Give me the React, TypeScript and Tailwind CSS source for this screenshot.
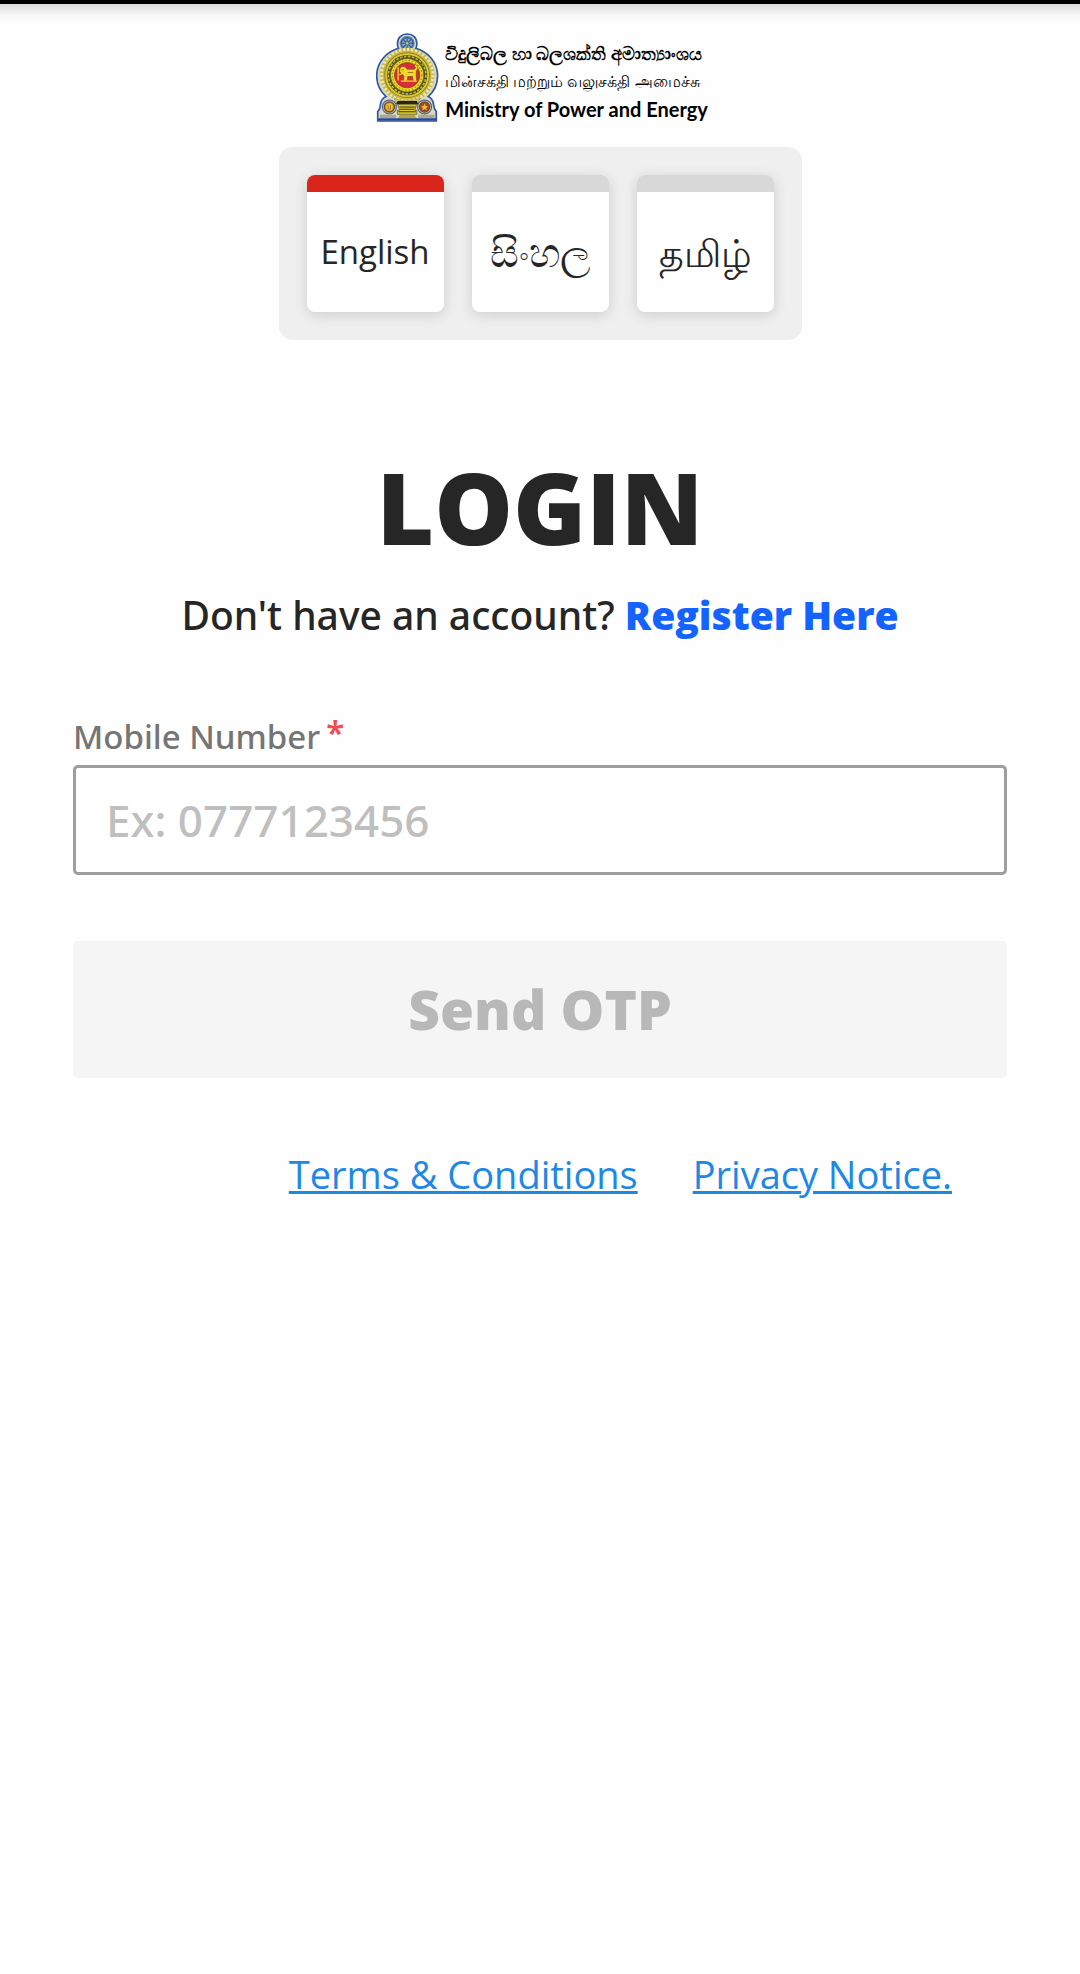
import { useState } from "react";

const languages = [
  { code: "en", label: "English", size: "text-[33px]" },
  { code: "si", label: "සිංහල", size: "text-[40px]" },
  { code: "ta", label: "தமிழ்", size: "text-[38px]" },
];

function Emblem() {
  return (
    <svg viewBox="48 36 188 266" className="h-[89px] w-[63px] shrink-0" role="img" aria-label="National emblem">
      <path
        d="M141 39c17 0 29 11 29 29 0 6-1 10-3 14 36 10 65 41 65 82 0 26-11 47-28 62 9 4 15 13 16 25 1 10 2 14 8 20v28H53v-28c6-6 8-10 8-20 1-12 7-21 17-25-17-15-28-36-28-62 0-41 29-72 65-82-2-4-3-8-3-14 0-18 12-29 29-29Z"
        fill="#d9d9c4"
        stroke="#2f56a5"
        strokeWidth="5"
      />
      <circle cx="141" cy="67" r="23" fill="#8fa6b8" />
      <circle cx="141" cy="67" r="18" fill="#8fa6b8" stroke="#3b68a8" strokeWidth="5" />
      <g stroke="#26568f" strokeWidth="3">
        <path d="M141 49v36M123 67h36M128 54l26 26M154 54l-26 26" />
      </g>
      <circle cx="141" cy="67" r="4" fill="#c5c27d" />
      <circle cx="141" cy="162" r="82" fill="#c9b845" />
      <circle cx="141" cy="162" r="77" fill="none" stroke="#e9e4bb" strokeWidth="9" strokeDasharray="7 5" />
      <circle cx="141" cy="162" r="67" fill="#d9c92f" stroke="#8f8327" strokeWidth="3" />
      <circle cx="141" cy="162" r="60" fill="#4b4720" />
      <circle cx="141" cy="162" r="56" fill="none" stroke="#c6b72b" strokeWidth="5" strokeDasharray="8 4" />
      <circle cx="141" cy="162" r="50" fill="#eedb25" stroke="#6e6725" strokeWidth="3" />
      <circle cx="141" cy="162" r="44" fill="none" stroke="#a79b27" strokeWidth="4" strokeDasharray="5 5" />
      <circle cx="141" cy="162" r="38" fill="#d92b3a" stroke="#7c4b22" strokeWidth="2" />
      <path
        d="M118 150c-1-9 5-15 12-14 6 1 8 5 11 8h20c6 0 6-7 1-9l3-5c9 3 10 12 4 18l-1 13 2 19h-11l-2-14h-14l-2 14h-11l1-15-4-5-8 4-4-4 7-4z"
        fill="#f1d924"
        stroke="#78451f"
        strokeWidth="2"
      />
      <path d="M114 138v40M122 180h48" stroke="#f1d924" strokeWidth="4" />
      <path d="M123 146h8M143 154h16" stroke="#78451f" strokeWidth="2" />
      <path d="M102 231c12 5 24 8 39 8s27-3 39-8l-10 20h-58z" fill="#d8ca72" stroke="#94903f" strokeWidth="2" />
      <path d="M112 239h58l4 9h-66z" fill="#26251d" />
      <path d="M113 249h56l-5 18h6v12h-58v-12h6z" fill="#dfcb28" stroke="#45401d" strokeWidth="2" />
      <path d="M118 257h46M120 264h42M115 271h52" stroke="#38351b" strokeWidth="3" />
      <path d="M119 280h44l6 12h-56z" fill="#b7a630" />
      <path d="M59 285h49M174 285h49" stroke="#aaa98e" strokeWidth="10" />
      <path d="M54 294h174" stroke="#28489b" strokeWidth="7" />
      <circle cx="88" cy="257" r="21" fill="#c9bd86" stroke="#425e93" strokeWidth="3" />
      <circle cx="88" cy="257" r="15" fill="#c79930" stroke="#7b4a31" strokeWidth="4" />
      <circle cx="88" cy="257" r="10" fill="#e3cc2c" />
      <path d="M84 251v12h7v-12" fill="none" stroke="#85512b" strokeWidth="2" />
      <circle cx="193" cy="257" r="21" fill="#c9bd86" stroke="#425e93" strokeWidth="3" />
      <circle cx="193" cy="257" r="15" fill="#a9432f" stroke="#7b4a31" strokeWidth="4" />
      <path d="m193 246 3 8 8 1-6 5 2 8-7-5-7 5 2-8-6-5 8-1z" fill="#e1c32e" />
    </svg>
  );
}

export default function App() {
  const [language, setLanguage] = useState("en");
  const [mobile, setMobile] = useState("");

  return (
    <div className="flex min-h-screen flex-col bg-[#fefefe] font-['Open_Sans','Noto_Sans',sans-serif] text-[#262626]">
      <div className="h-1 bg-black" />
      <div className="h-5 bg-linear-to-b from-[#dcdcdc] via-[#f8f8f8] via-60% to-[#fefefe]" />

      <header className="flex flex-col items-center pt-[7px]">
        <div className="flex items-center gap-1.5 pl-1 text-black">
          <Emblem />
          <div className="flex flex-col pt-2 whitespace-nowrap">
            <span lang="si" className="text-[18px] leading-7 font-bold">විදුලිබල හා බලශක්ති අමාත්‍යාංශය</span>
            <span lang="ta" className="text-[16px] leading-7 font-medium">மின்சக்தி மற்றும் வலுசக்தி அமைச்சு</span>
            <span className="font-[Lato,sans-serif] text-[20px] leading-7 font-bold">Ministry of Power and Energy</span>
          </div>
        </div>

        <nav aria-label="Language" className="mt-6 flex gap-7 rounded-[14px] bg-[#efefef] p-7">
          {languages.map(({ code, label, size }) => (
            <button
              key={code}
              type="button"
              lang={code}
              aria-pressed={language === code}
              onClick={() => setLanguage(code)}
              className="flex size-[137px] flex-col overflow-hidden rounded-lg bg-white shadow-[0_3px_14px_rgba(0,0,0,0.14)]"
            >
              <span className={language === code ? "h-[17px] w-full bg-[#da251d]" : "h-[17px] w-full bg-[#d8d8d8]"} />
              <span className={`flex w-full flex-1 items-center justify-center leading-10 ${size}`}>{label}</span>
            </button>
          ))}
        </nav>
      </header>

      <main className="flex flex-col px-[73px] pt-[99px]">
        <h1 className="text-center text-[99px] leading-[136px] font-extrabold">LOGIN</h1>
        <p className="mt-3 text-center font-['Noto_Sans',sans-serif] text-[39px] leading-[56px] font-medium">
          Don't have an account?{" "}
          <a href="#register" className="font-['Open_Sans',sans-serif] font-extrabold text-[#1463ff]">Register Here</a>
        </p>

        <form className="mt-[66px] flex flex-col font-['Noto_Sans',sans-serif]" onSubmit={(e) => e.preventDefault()}>
          <label htmlFor="mobile" className="flex items-start gap-1.5 text-[33px] leading-[56px] font-medium text-[#757575]">
            Mobile Number
            <span className="leading-12 font-semibold text-[#f24b50]">*</span>
          </label>
          <input
            id="mobile"
            type="tel"
            value={mobile}
            onChange={(e) => setMobile(e.target.value)}
            placeholder="Ex: 0777123456"
            className="h-[110px] w-full rounded-[5px] border-3 border-[#9e9e9e] bg-white px-[30px] text-[44px] font-medium placeholder:text-[#bfbfbf]"
          />
          <button
            type="submit"
            disabled={mobile === ""}
            className="mt-[66px] h-[137px] w-full rounded-[5px] bg-[#f5f5f5] font-['Open_Sans',sans-serif] text-[55px] font-extrabold text-[#b8b8b8]"
          >
            Send OTP
          </button>
        </form>

        <div className="mt-[68px] flex justify-end gap-[55px] pr-[55px] text-[38px] leading-[56px] text-[#1e88e5]">
          <a href="#terms" className="underline">Terms &amp; Conditions</a>
          <a href="#privacy" className="underline">Privacy Notice.</a>
        </div>
      </main>
    </div>
  );
}
